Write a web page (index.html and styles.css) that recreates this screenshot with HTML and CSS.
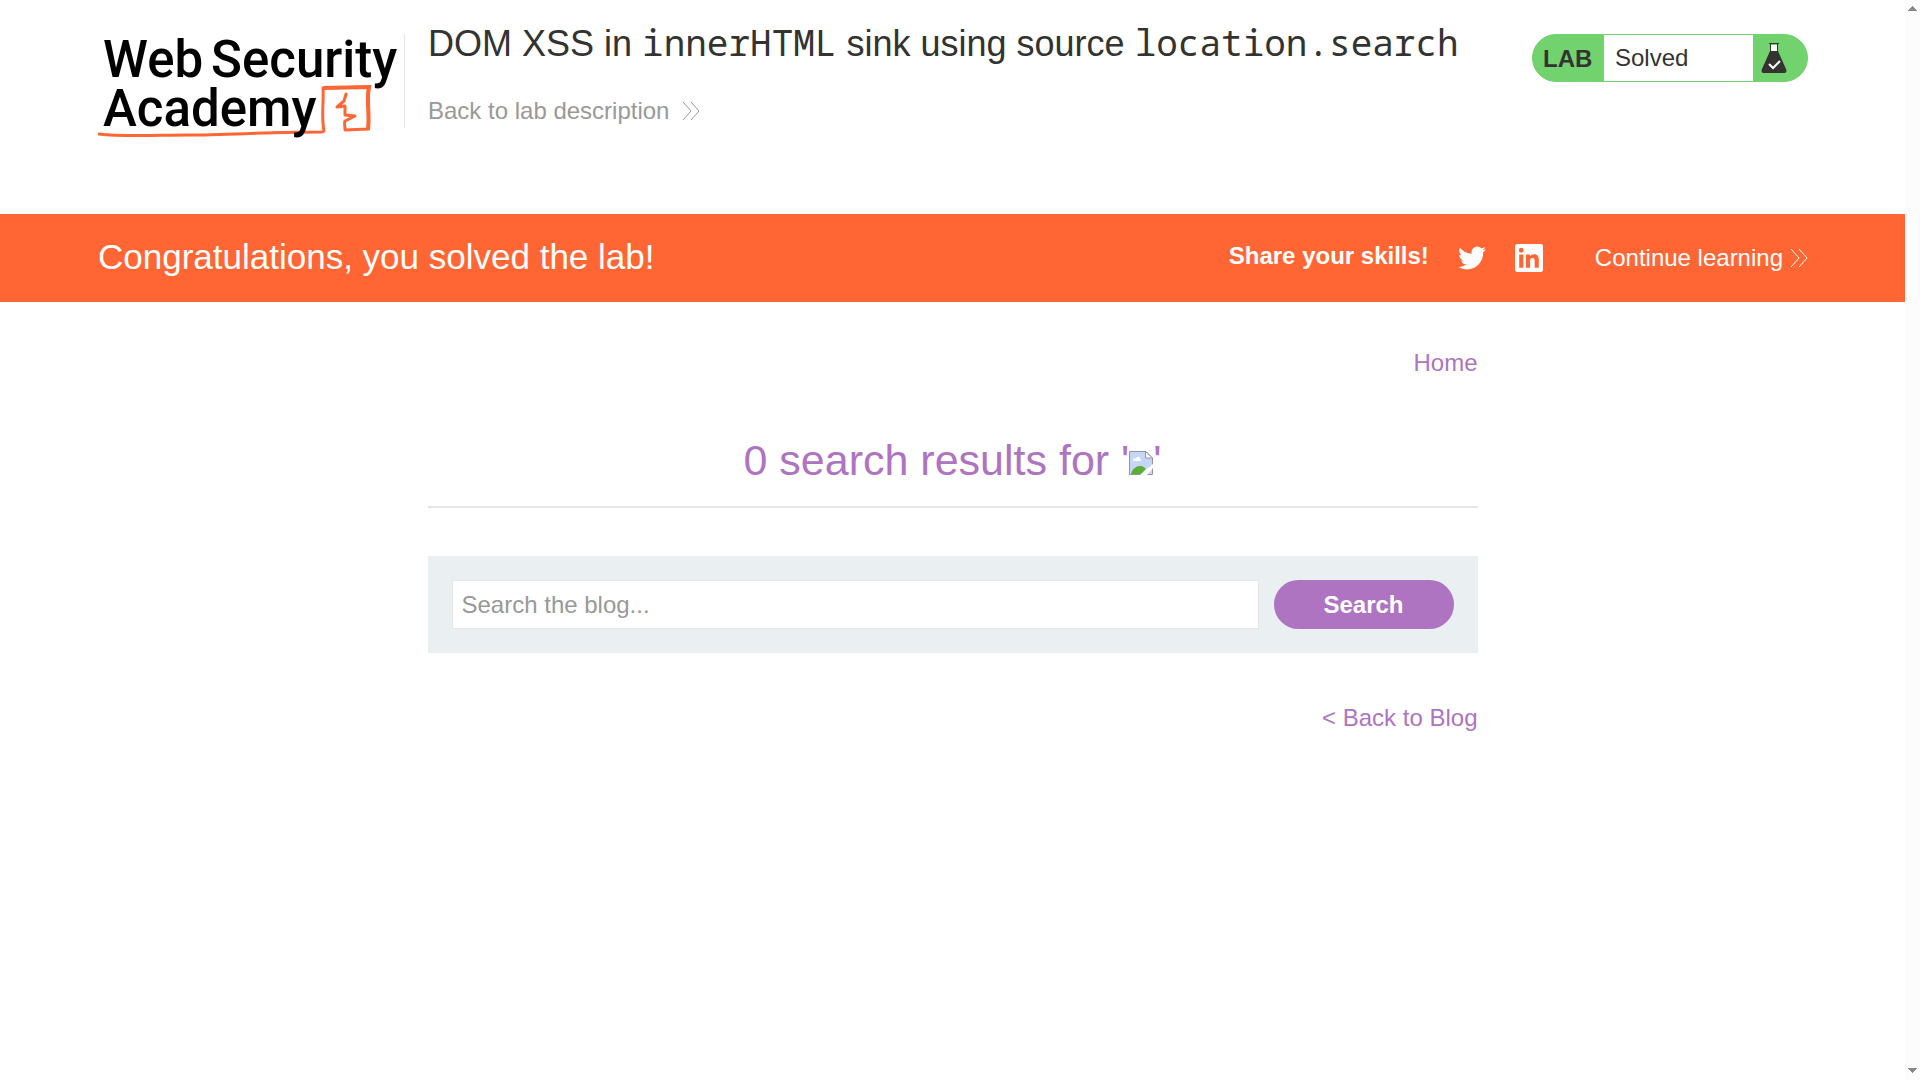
FILE: index.html
```html
<!DOCTYPE html>
<html lang="en">
<head>
<meta charset="utf-8">
<title>DOM XSS in innerHTML sink using source location.search</title>
<link rel="stylesheet" href="styles.css">
</head>
<body>
<div class="page">
  <header class="lab-header">
    <a class="logo" href="#" aria-label="Web Security Academy">
      <svg class="logo-mark" viewBox="0 0 306 110" fill="none" stroke="#ff6633" aria-hidden="true">
        <path d="M1 88 C25 91 60 89 90 89 C130 89 170 86 224 86 L226 85 C223 70 226 55 225 42 L271 41 C268 55 272 65 270 83 L247 84 C247 79 246 77 247 75 L257 70 L247 69 L247 60 L239 61 L246 55 L248 48" stroke-width="3" stroke-linecap="round" stroke-linejoin="round"/>
        <path d="M225 42 L271 41 C268 55 272 65 270 84" stroke-width="4"/>
      </svg>
      <span class="logo-line"><span>Web</span><span>Security</span></span>
      <span class="logo-line">Academy</span>
    </a>
    <div class="title-block">
      <h1>DOM XSS in <code>innerHTML</code> sink using source <code>location.search</code></h1>
      <a class="back-lab" href="#">Back to lab description
        <svg class="chevrons" viewBox="0 0 18 20" aria-hidden="true"><path d="M1 1l8 9-8 9M9 1l8 9-8 9"/></svg>
      </a>
    </div>
    <div class="status">
      <strong>LAB</strong>
      <span class="status-text">Solved</span>
      <svg class="flask" viewBox="0 0 26 31" aria-hidden="true">
        <path fill="#fff" d="M10 2h6v6h-6z"/>
        <path fill="#333332" fill-rule="evenodd" d="M8 0h10v1h-1v7l8 18c1 3 0 4-2 4H3c-2 0-3-1-2-4L9 8V1H8zM10 1v7h6V1z"/>
        <path fill="none" stroke="#fff" stroke-width="2" d="M8 21l4 4 7-7"/>
      </svg>
    </div>
  </header>

  <section class="banner">
    <h2>Congratulations, you solved the lab!</h2>
    <div class="share">
      <strong>Share your skills!</strong>
      <a href="#" aria-label="Twitter"><svg class="social" viewBox="0 0 24 24"><path d="M23.95 4.57a10 10 0 0 1-2.82.77 4.96 4.96 0 0 0 2.16-2.72c-.95.55-2 .95-3.13 1.18a4.92 4.92 0 0 0-8.38 4.48C7.69 8.1 4.07 6.13 1.64 3.16a4.93 4.93 0 0 0 1.52 6.57 4.9 4.9 0 0 1-2.23-.61v.06c0 2.39 1.7 4.38 3.95 4.83a5 5 0 0 1-2.21.08 4.94 4.94 0 0 0 4.6 3.42A9.87 9.87 0 0 1 0 19.54a14 14 0 0 0 7.55 2.21c9.05 0 14-7.5 14-13.99 0-.21 0-.42-.02-.63a9.94 9.94 0 0 0 2.42-2.56z"/></svg></a>
      <a href="#" aria-label="LinkedIn"><svg class="social" viewBox="0 0 24 24"><path fill-rule="evenodd" d="M2 0h20a2 2 0 0 1 2 2v20a2 2 0 0 1-2 2H2a2 2 0 0 1-2-2V2a2 2 0 0 1 2-2zM3.600 9v11.400h3.500V9zM5.340 3.300a2.060 2.060 0 1 0 0 4.130 2.060 2.060 0 0 0 0-4.130zM9.350 9v11.400h3.550v-5.600c0-1.500.3-2.900 2.100-2.900s1.850 1.700 1.850 3v5.500h3.550v-6.200c0-3.100-.65-5.400-4.250-5.400-1.700 0-2.850.9-3.350 1.800V9z"/></svg></a>
    </div>
    <a class="continue" href="#">Continue learning
      <svg class="chevrons" viewBox="0 0 18 20" aria-hidden="true"><path d="M1 1l8 9-8 9M9 1l8 9-8 9"/></svg>
    </a>
  </section>

  <main class="content">
    <nav class="links"><a href="#">Home</a></nav>
    <h2 class="results">0 search results for '<svg class="broken" viewBox="0 0 24 24" role="img" aria-label="Missing image">
      <path fill="#c5d6f7" d="M1 1h15l7 7v15H1z"/>
      <path fill="#fff" d="M4 9c0-2 3-2 3-1 0-3 5-3 4 0 2 0 1 2 0 2H5c-1 0-1 0-1-1z"/>
      <path fill="#5aae36" d="M2 23c1-5 5-8 9-8s6 2 8 8z"/>
      <path fill="none" stroke="#959595" d="M.5 23.500V.5H17l6.500 6.500v16.500z"/>
      <path fill="#fff" stroke="#959595" d="M16.500.5v6.500h7z"/>
      <path fill="#fff" d="M24 13v4l-6 7h-7l6-6c3-1 4-3 7-5z"/>
    </svg>'</h2>
    <form class="search">
      <input type="text" placeholder="Search the blog..." aria-label="Search the blog">
      <button type="button">Search</button>
    </form>
    <nav class="links"><a href="#">&lt; Back to Blog</a></nav>
  </main>
</div>
<div class="scroll-track" aria-hidden="true">
  <svg viewBox="0 0 9 5"><path d="M4 0h1v1h1v1h1v1h1v1h1v1H0V4h1V3h1V2h1V1h1z"/></svg>
  <svg viewBox="0 0 9 5"><path d="M0 0h9v1H8v1H7v1H6v1H5v1H4V4H3V3H2V2H1V1H0z"/></svg>
</div>
</body>
</html>
```
FILE: styles.css
```css
* { box-sizing: border-box; }

body {
  margin: 0;
  min-height: 100vh;
  display: grid;
  grid-template-columns: minmax(0, 1fr) 15px;
  background: #fff;
  color: #333332;
  font: 24px/32px "Liberation Sans", Arial, sans-serif;
}

h1, h2 { margin: 0; font-weight: 400; }
a { color: inherit; text-decoration: none; }
svg { display: block; }

.lab-header {
  display: flex;
  align-items: flex-start;
  min-height: 214px;
  padding: 0 97px 0 98px;
}

.logo {
  position: relative;
  width: 307px;
  height: 94px;
  margin-top: 34px;
  padding: 1px 0 0 5px;
  border-right: 1px solid #e5e5e5;
  color: #000;
  font: 500 51px/49px Roboto, sans-serif;
}
.logo-mark {
  position: absolute;
  top: 12px;
  left: 0;
  width: 306px;
  height: 110px;
}
.logo-line { position: relative; display: flex; gap: 8px; }

.title-block { flex: 1; padding: 22px 0 0 23px; }
h1 { font-size: 36px; line-height: 43px; }
code { font-family: "Noto Sans Mono", monospace; font-size: 36px; line-height: 1; }
.back-lab {
  display: inline-flex;
  align-items: center;
  gap: 13px;
  margin-top: 30px;
  color: #999;
}
.chevrons { width: 18px; height: 20px; fill: none; stroke: currentColor; }

.status {
  display: flex;
  width: 276px;
  height: 48px;
  margin-top: 34px;
  border: 1px solid #72d26e;
  border-radius: 24px;
  background: #72d26e;
  line-height: 48px;
  overflow: hidden;
}
.status strong { width: 71px; padding-left: 10px; }
.status-text { width: 149px; padding-left: 11px; background: #fff; line-height: 46px; }
.flask { width: 26px; height: 31px; margin: 8px 0 0 8px; }

.banner {
  display: flex;
  align-items: center;
  min-height: 88px;
  padding: 0 97px 0 98px;
  background: #f63;
  color: #fff;
}
.banner h2 { flex: 1; padding-bottom: 2px; font-size: 35px; line-height: 40px; }
.share { display: flex; align-items: center; gap: 29px; }
.share strong { padding-bottom: 4px; }
.social { width: 28px; height: 28px; fill: #fff; }
.continue { display: flex; align-items: center; gap: 7px; margin-left: 52px; }

.content { width: 1050px; max-width: 100%; margin: 0 auto; padding-top: 45px; }
.links { text-align: right; color: #ae74c2; }
.results {
  margin: 53px 0 48px;
  padding-bottom: 18px;
  border-bottom: 2px solid #e5e5e5;
  color: #ae74c2;
  font-size: 43px;
  line-height: 56px;
  text-align: center;
}
.broken { display: inline-block; width: 24px; height: 24px; vertical-align: baseline; }
.search {
  display: flex;
  gap: 15px;
  margin-bottom: 49px;
  padding: 24px;
  background: #eaeff2;
}
.search input {
  flex: 1;
  min-width: 0;
  height: 49px;
  padding: 0 9px;
  border: 1px solid #e5e5e5;
  font: inherit;
}
.search input::placeholder { color: #999; }
.search button {
  width: 180px;
  height: 49px;
  border: 0;
  border-radius: 25px;
  background: #ae74c2;
  color: #fff;
  font: inherit;
  font-weight: 700;
}

.scroll-track {
  position: sticky;
  top: 0;
  height: 100vh;
  display: flex;
  flex-direction: column;
  justify-content: space-between;
  align-items: center;
  padding: 6px 0 7px;
  background: #fcfcfc;
}
.scroll-track svg { width: 9px; height: 5px; fill: #888; }
```
